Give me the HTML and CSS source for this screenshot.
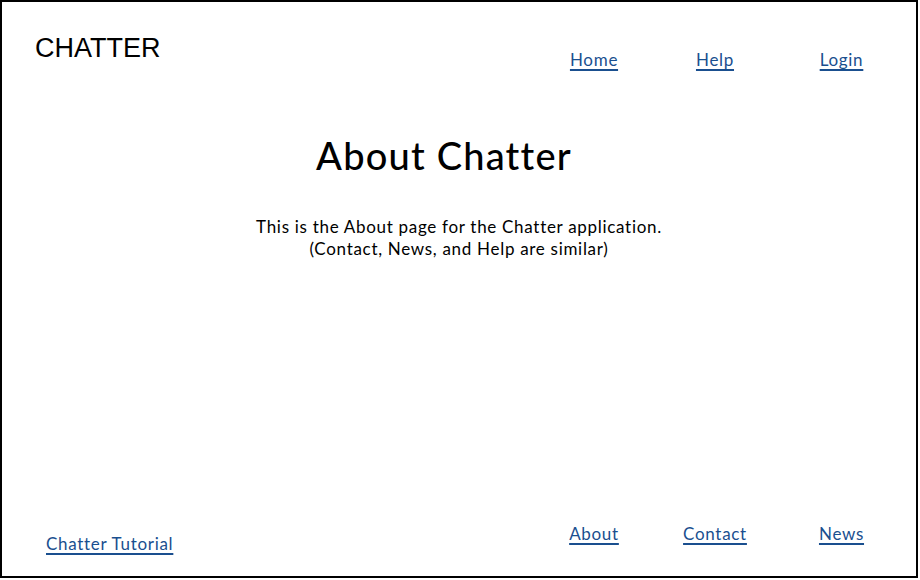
FILE: index.html
```html
<!DOCTYPE html>
<html>
<head>
<meta charset="utf-8">
<link rel="stylesheet" href="styles.css">
</head>
<body>
<div class="frame">
  <header class="top">
    <div class="logo">CHATTER</div>
    <nav class="links top-links">
      <a href="#">Home</a>
      <a href="#">Help</a>
      <a href="#">Login</a>
    </nav>
  </header>
  <main class="content">
    <h1 class="title">About Chatter</h1>
    <p class="intro">This is the About page for the Chatter application.<br>(Contact, News, and Help are similar)</p>
  </main>
  <footer class="bottom">
    <a class="tutorial" href="#">Chatter Tutorial</a>
    <nav class="links bottom-links">
      <a href="#">About</a>
      <a href="#">Contact</a>
      <a href="#">News</a>
    </nav>
  </footer>
</div>
</body>
</html>
```
FILE: styles.css
```css
html, body {
  margin: 0;
  padding: 0;
  background: #fff;
}
.frame {
  width: 918px;
  height: 578px;
  box-sizing: border-box;
  border: 2px solid #000;
  display: flex;
  flex-direction: column;
  font-family: Lato, "Open Sans", sans-serif;
  color: #000;
}
.top {
  display: flex;
  justify-content: space-between;
  align-items: flex-start;
  padding: 31px 10px 0 33px;
}
.logo {
  font-family: "Liberation Sans", Arial, sans-serif;
  font-size: 27px;
  line-height: 30px;
}
.links {
  display: grid;
  grid-template-columns: 118px 124px 129px;
}
.links a {
  justify-self: center;
  color: #1a4f8f;
  font-size: 17px;
  line-height: 20px;
  letter-spacing: 0.7px;
  text-decoration: underline;
  text-underline-offset: 3px;
  text-decoration-thickness: 1.5px;
}
.top-links {
  margin-top: 17px;
}
.content {
  flex: 1;
  text-align: center;
}
.title {
  margin: 63px 0 0 -30px;
  font-size: 38px;
  font-weight: 500;
  line-height: 44px;
  letter-spacing: 1.2px;
}
.intro {
  margin: 39px 0 0;
  font-size: 17px;
  line-height: 22px;
  letter-spacing: 0.7px;
}
.bottom {
  display: flex;
  justify-content: space-between;
  align-items: flex-start;
  padding: 0 10px 22px 44px;
}
.tutorial {
  margin-top: 10px;
  color: #1a4f8f;
  font-size: 17px;
  line-height: 20px;
  letter-spacing: 0.7px;
  text-decoration: underline;
  text-underline-offset: 3px;
  text-decoration-thickness: 1.5px;
}
```
